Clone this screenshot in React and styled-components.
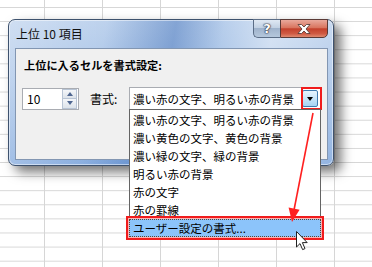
import React from 'react';
import styled, { createGlobalStyle } from 'styled-components';

const GlobalStyle = createGlobalStyle`
  html, body {
    margin: 0;
    padding: 0;
    overflow: hidden;
  }
  body {
    font-family: "Noto Sans CJK JP", "Noto Sans", sans-serif;
    color: #000;
  }
`;

const items = [
  '濃い赤の文字、明るい赤の背景',
  '濃い黄色の文字、黄色の背景',
  '濃い緑の文字、緑の背景',
  '明るい赤の背景',
  '赤の文字',
  '赤の罫線',
  'ユーザー設定の書式...',
];

function App() {
  return (
    <>
      <GlobalStyle />
      <Sheet>
        <Dialog>
          <TitleBar>
            <Title>上位 10 項目</Title>
            <CaptionButtons>
              <HelpButton>?</HelpButton>
              <CloseButton>
                <svg width="14" height="10" viewBox="0 0 14 10">
                  <path
                    d="M1 0.5 L4.5 0.5 L7 3 L9.5 0.5 L13 0.5 L9 5 L13 9.5 L9.5 9.5 L7 7 L4.5 9.5 L1 9.5 L5 5 Z"
                    fill="#fff"
                    stroke="#4a3430"
                    strokeWidth="0.8"
                  />
                </svg>
              </CloseButton>
            </CaptionButtons>
          </TitleBar>
          <Client>
            <Heading>上位に入るセルを書式設定:</Heading>
            <Row>
              <SpinBox>
                <SpinValue>10</SpinValue>
                <SpinButtons>
                  <SpinButton>
                    <Tri $up />
                  </SpinButton>
                  <SpinButton>
                    <Tri />
                  </SpinButton>
                </SpinButtons>
              </SpinBox>
              <FieldLabel>書式:</FieldLabel>
              <Combo>
                <ComboText>{items[0]}</ComboText>
                <DropButton>
                  <DropTri />
                </DropButton>
                <RedMark $inset="-1px -2px -1px auto" $width="21px" />
                <List>
                  {items.map((text, i) => (
                    <Item key={text} $selected={i === items.length - 1}>
                      {text}
                    </Item>
                  ))}
                </List>
              </Combo>
            </Row>
          </Client>
        </Dialog>
        <Overlay width="372" height="267" viewBox="0 0 372 267">
          <line x1="313" y1="113" x2="294" y2="210" stroke="#ff2020" strokeWidth="1.6" />
          <polygon points="292,222 288.6,207.5 299.6,209.8" fill="#ff2020" />
          <path
            d="M296.5 231.5 L296.5 247 L300 243.6 L302.6 249.6 L305 248.6 L302.4 242.6 L307.2 242.6 Z"
            fill="#fff"
            stroke="#222"
            strokeWidth="1"
            strokeLinejoin="round"
          />
        </Overlay>
      </Sheet>
    </>
  );
}

export default App;

const Sheet = styled.div`
  position: relative;
  width: 372px;
  height: 267px;
  overflow: hidden;
  background-color: #fff;
  background-image: linear-gradient(to right, #d6d6d6 1px, transparent 1px),
    linear-gradient(to bottom, #d6d6d6 1px, transparent 1px);
  background-size: 58px 100%, 100% 14.1px;
  background-position: 44px 0, 0 7px;
`;

const Dialog = styled.div`
  position: absolute;
  left: 8px;
  top: 19px;
  width: 326px;
  height: 147px;
  box-sizing: border-box;
  display: flex;
  flex-direction: column;
  padding: 0 5px 5px 6px;
  border: 1px solid #3e526e;
  border-radius: 7px;
  background: linear-gradient(
      100deg,
      rgba(255, 255, 255, 0.35) 0%,
      rgba(255, 255, 255, 0.1) 28%,
      rgba(40, 90, 170, 0.35) 48%,
      rgba(255, 255, 255, 0.05) 62%,
      rgba(255, 255, 255, 0.45) 76%,
      rgba(255, 255, 255, 0.15) 100%
    ),
    linear-gradient(to bottom, #b6cdeb 0%, #a3c0e6 40%, #7ea6dc 100%);
  box-shadow: 7px 6px 12px rgba(0, 0, 0, 0.55), inset 0 0 0 1px rgba(255, 255, 255, 0.5);
`;

const TitleBar = styled.div`
  display: flex;
  justify-content: space-between;
  align-items: flex-start;
  height: 28px;
  flex-shrink: 0;
`;

const Title = styled.div`
  padding: 6px 0 0 1px;
  font-size: 12px;
  line-height: 16px;
  color: #111;
`;

const CaptionButtons = styled.div`
  display: flex;
  margin-top: -1px;
`;

const HelpButton = styled.div`
  width: 27px;
  height: 19px;
  box-sizing: border-box;
  display: flex;
  align-items: center;
  justify-content: center;
  border: 1px solid #5b6d86;
  border-right: none;
  border-radius: 0 0 0 5px;
  background: linear-gradient(to bottom, #dfe8f3 0%, #c2d1e3 45%, #9fb3cc 50%, #b5c7dc 100%);
  color: #fff;
  font-family: "DejaVu Sans", sans-serif;
  font-weight: bold;
  font-size: 13px;
  text-shadow: 0 0 1px #223, 0 0 1px #223, 0 0 2px #334;
`;

const CloseButton = styled.div`
  width: 48px;
  height: 19px;
  box-sizing: border-box;
  display: flex;
  align-items: center;
  justify-content: center;
  border: 1px solid #5a3a36;
  border-radius: 0 0 5px 0;
  background: linear-gradient(to bottom, #e9a99c 0%, #d9755f 45%, #c3412c 52%, #cf5a43 80%, #e08a70 100%);
`;

const Client = styled.div`
  flex: 1;
  box-sizing: border-box;
  display: flex;
  flex-direction: column;
  padding: 8px 0 0 6px;
  border: 1px solid #8296b2;
  background: #f0f0f0;
`;

const Heading = styled.div`
  margin-left: 2px;
  font-size: 11.2px;
  font-weight: bold;
  line-height: 16px;
`;

const Row = styled.div`
  display: flex;
  align-items: center;
  margin-top: 14px;
`;

const SpinBox = styled.div`
  width: 57px;
  height: 22px;
  box-sizing: border-box;
  display: flex;
  justify-content: space-between;
  border: 1px solid #a9acb2;
  background: #fff;
`;

const SpinValue = styled.div`
  padding-left: 4px;
  font-size: 12px;
  line-height: 20px;
`;

const SpinButtons = styled.div`
  display: flex;
  flex-direction: column;
  width: 15px;
  margin-right: 1px;
`;

const SpinButton = styled.div`
  flex: 1;
  display: flex;
  align-items: center;
  justify-content: center;
  box-sizing: border-box;
  border: 1px solid #b8c4d4;
  background: linear-gradient(to bottom, #f4f6f9, #dde3ea);
  & + & {
    border-top: none;
  }
`;

const Tri = styled.div`
  width: 0;
  height: 0;
  border-left: 3.5px solid transparent;
  border-right: 3.5px solid transparent;
  ${props =>
    props.$up
      ? 'border-bottom: 4px solid #4f6690;'
      : 'border-top: 4px solid #4f6690;'}
`;

const FieldLabel = styled.div`
  width: 39px;
  margin-left: 11px;
  font-size: 12px;
  line-height: 16px;
`;

const Combo = styled.div`
  position: relative;
  width: 192px;
  height: 23px;
  box-sizing: border-box;
  display: flex;
  align-items: center;
  justify-content: space-between;
  border: 1px solid #a9acb2;
  background: #fff;
`;

const ComboText = styled.div`
  padding-left: 3px;
  font-size: 11.5px;
  line-height: 16px;
  white-space: nowrap;
`;

const DropButton = styled.div`
  width: 16px;
  height: 17px;
  margin-right: 2px;
  box-sizing: border-box;
  display: flex;
  align-items: center;
  justify-content: center;
  border: 1px solid #3f7cb0;
  border-radius: 2px;
  background: linear-gradient(to bottom, #e6f4fd 0%, #c7e5f9 50%, #a6d3f3 100%);
`;

const DropTri = styled.div`
  width: 0;
  height: 0;
  border-left: 3.5px solid transparent;
  border-right: 3.5px solid transparent;
  border-top: 4px solid #000;
`;

const RedMark = styled.div`
  position: absolute;
  inset: ${props => props.$inset};
  width: ${props => props.$width};
  border: 2px solid #f01c1c;
  box-sizing: border-box;
  pointer-events: none;
`;

const List = styled.div`
  position: absolute;
  top: 100%;
  left: -1px;
  width: 192px;
  box-sizing: border-box;
  padding: 1px 0 2px;
  border: 1px solid #646464;
  background: #fff;
  z-index: 2;
`;

const Item = styled.div`
  position: relative;
  height: 18px;
  box-sizing: border-box;
  padding-left: 3px;
  font-size: 11.5px;
  line-height: 18px;
  white-space: nowrap;
  ${props =>
    props.$selected &&
    `
    margin: 0 -1px;
    padding-left: 4px;
    background: #8cc4fa;
    outline: 1px dotted #5a4632;
    outline-offset: -1px;
    box-shadow: 0 0 0 1px #ffb0b0, 0 0 0 3px #f01c1c;
  `}
`;

const Overlay = styled.svg`
  position: absolute;
  left: 0;
  top: 0;
  pointer-events: none;
  z-index: 3;
`;
